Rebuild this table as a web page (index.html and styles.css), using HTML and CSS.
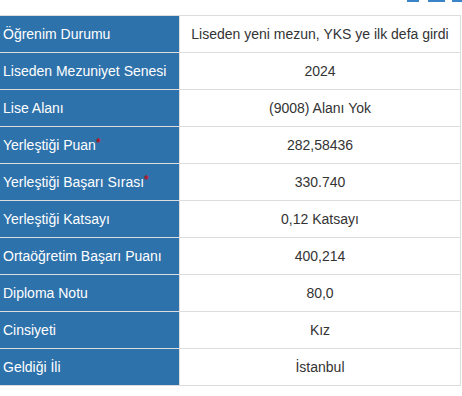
FILE: index.html
```html
<!DOCTYPE html>
<html lang="tr">
<head>
<meta charset="utf-8">
<link rel="stylesheet" href="styles.css">
</head>
<body>
<div class="topbar">
  <span class="tab tab-a"></span>
  <span class="tab tab-b"></span>
  <span class="tab tab-c"></span>
</div>
<table class="info">
  <tbody>
    <tr><th>Öğrenim Durumu</th><td>Liseden yeni mezun, YKS ye ilk defa girdi</td></tr>
    <tr><th>Liseden Mezuniyet Senesi</th><td>2024</td></tr>
    <tr><th>Lise Alanı</th><td>(9008) Alanı Yok</td></tr>
    <tr><th>Yerleştiği Puan<sup class="req">*</sup></th><td>282,58436</td></tr>
    <tr><th>Yerleştiği Başarı Sırası<sup class="req">*</sup></th><td>330.740</td></tr>
    <tr><th>Yerleştiği Katsayı</th><td>0,12 Katsayı</td></tr>
    <tr><th>Ortaöğretim Başarı Puanı</th><td>400,214</td></tr>
    <tr><th>Diploma Notu</th><td>80,0</td></tr>
    <tr><th>Cinsiyeti</th><td>Kız</td></tr>
    <tr><th>Geldiği İli</th><td>İstanbul</td></tr>
  </tbody>
</table>
</body>
</html>
```
FILE: styles.css
```css
html, body {
  margin: 0;
  padding: 0;
  background: #fff;
}
body {
  font-family: "Liberation Sans", Arial, sans-serif;
  font-size: 14px;
  color: #333;
}
.topbar {
  height: 15px;
  display: flex;
  justify-content: flex-end;
  align-items: flex-start;
}
.tab {
  display: block;
  height: 2px;
  background: #3a84c8;
}
.tab-a { width: 12px; margin-right: 9px; }
.tab-b { width: 17px; margin-right: 7px; }
.tab-c { width: 10px; }
.info {
  border-collapse: separate;
  border-spacing: 0;
  border-top: 1px solid #ddd;
  width: 461px;
}
.info th,
.info td {
  height: 36px;
  padding: 0;
  border-bottom: 1px solid #ddd;
  border-right: 1px solid #ddd;
  vertical-align: middle;
  font-weight: normal;
  line-height: 20px;
}
.info th {
  width: 176px;
  padding-left: 3px;
  text-align: left;
  background: #2e72ab;
  color: #fff;
  white-space: nowrap;
}
.info td {
  width: 280px;
  text-align: center;
  color: #333;
}
.req {
  color: #b5141f;
  font-size: 12px;
  font-weight: bold;
  line-height: 0;
  vertical-align: 3px;
}
```
